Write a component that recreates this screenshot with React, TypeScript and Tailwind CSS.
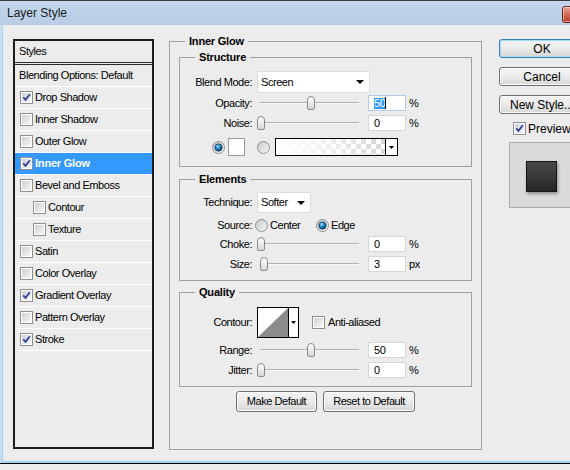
import type { ReactNode } from 'react';

interface StyleItem {
  label: string;
  checked?: boolean;
  active?: boolean;
  indent?: boolean;
}

const STYLE_ITEMS: StyleItem[] = [
  { label: 'Drop Shadow', checked: true },
  { label: 'Inner Shadow' },
  { label: 'Outer Glow' },
  { label: 'Inner Glow', checked: true, active: true },
  { label: 'Bevel and Emboss' },
  { label: 'Contour', indent: true },
  { label: 'Texture', indent: true },
  { label: 'Satin' },
  { label: 'Color Overlay' },
  { label: 'Gradient Overlay', checked: true },
  { label: 'Pattern Overlay' },
  { label: 'Stroke', checked: true },
];

function CheckBox({ checked = false }: { checked?: boolean }) {
  return (
    <span className="flex h-[13px] w-[13px] shrink-0 border border-[#8e8f8f] bg-white p-px">
      <span className="flex h-full w-full items-center justify-center bg-gradient-to-br from-[#cdd0d4] to-[#f7f7f7]">
        {checked && (
          <svg width="9" height="9" viewBox="0 0 9 9">
            <path d="M1.3 4.4 L3.5 6.9 L7.9 1.3" fill="none" stroke="#2b3f94" strokeWidth="1.7" />
          </svg>
        )}
      </span>
    </span>
  );
}

function Radio({ on = false }: { on?: boolean }) {
  return (
    <svg width="13" height="13" viewBox="0 0 13 13" className="shrink-0">
      <defs>
        <linearGradient id="radioFill" x1="0" y1="0" x2="1" y2="1">
          <stop offset="0" stopColor="#c4c6c9" />
          <stop offset="1" stopColor="#f8f8f8" />
        </linearGradient>
        <radialGradient id="radioDot" cx="0.4" cy="0.35" r="0.7">
          <stop offset="0" stopColor="#9adcfc" />
          <stop offset="0.5" stopColor="#1b7fc5" />
          <stop offset="1" stopColor="#0a3a68" />
        </radialGradient>
      </defs>
      <circle cx="6.5" cy="6.5" r="6" fill="url(#radioFill)" stroke="#8e8f8f" />
      {on && <circle cx="6.5" cy="6.5" r="3.7" fill="url(#radioDot)" stroke="#16324d" strokeWidth="0.7" />}
    </svg>
  );
}

function Arrow({ small = false }: { small?: boolean }) {
  return small ? (
    <svg width="5" height="3" viewBox="0 0 5 3">
      <path d="M0 0H5L2.5 3Z" fill="#000" />
    </svg>
  ) : (
    <svg width="8" height="4" viewBox="0 0 8 4">
      <path d="M0 0H8L4 4Z" fill="#000" />
    </svg>
  );
}

function Select({ value, className = '' }: { value: string; className?: string }) {
  return (
    <div className={`flex h-full items-center justify-between border border-[#dcdcdc] bg-white pl-[3px] pr-[5px] ${className}`}>
      <span>{value}</span>
      <Arrow />
    </div>
  );
}

function Slider({ value }: { value: number }) {
  return (
    <div className="relative h-[16px] w-[102px] shrink-0">
      <div className="absolute left-[3px] right-0 top-[7px] h-[2px] border-t border-[#b2b2b2] bg-[#f6f6f6]" />
      <div
        className="absolute top-[1px] h-[14px] w-[8px] rounded-t-[4px] rounded-b-[2px] border border-[#8b8b8b] bg-gradient-to-b from-white to-[#d6d6d6]"
        style={{ left: value }}
      />
    </div>
  );
}

function NumBox({ value, selected = false }: { value: string; selected?: boolean }) {
  return (
    <div
      className={`flex h-[16px] w-[38px] shrink-0 items-center border bg-white pl-[5px] ${
        selected ? 'border-[#b7cbe0]' : 'border-[#d6d6d6]'
      }`}
    >
      {selected ? (
        <>
          <span className="bg-[#3399ff] text-white">{value}</span>
          <span className="h-[12px] w-px bg-black" />
        </>
      ) : (
        value
      )}
    </div>
  );
}

function SliderRow({
  label,
  value,
  text,
  unit = '%',
  selected,
  className = '',
}: {
  label: string;
  value: number;
  text: string;
  unit?: string;
  selected?: boolean;
  className?: string;
}) {
  return (
    <div className={`flex h-[16px] items-center ${className}`}>
      <span className="w-[72px] shrink-0 text-right">{label}</span>
      <div className="ml-[5px]">
        <Slider value={value} />
      </div>
      <div className="ml-[9px]">
        <NumBox value={text} selected={selected} />
      </div>
      <span className="ml-[3px]">{unit}</span>
    </div>
  );
}

function Group({ title, className = '', children }: { title: string; className?: string; children: ReactNode }) {
  return (
    <div className={`border border-[#a0a0a0] ${className}`}>
      <div className="-mt-[8px] ml-[15px] w-fit bg-[#ececec] px-[4px] font-bold leading-[14px] tracking-[-0.2px]">
        {title}
      </div>
      {children}
    </div>
  );
}

function Btn({ children, primary = false, className = '' }: { children: ReactNode; primary?: boolean; className?: string }) {
  return (
    <button
      type="button"
      className={`flex items-center justify-center rounded-[3px] border bg-gradient-to-b from-[#f3f3f3] via-[#ebebeb] to-[#d6d6d6] ${
        primary
          ? 'border-[#3c7fb1] shadow-[inset_0_0_0_1px_#9fdcf8]'
          : 'border-[#707070] shadow-[inset_0_0_0_1px_#fbfbfb]'
      } ${className}`}
    >
      {children}
    </button>
  );
}

export default function App() {
  return (
    <div className="h-[470px] w-[570px] overflow-hidden bg-[#ececec] font-['Liberation_Sans',Arial,sans-serif] text-[11px] leading-none tracking-[-0.45px] text-black">
      <div className="w-[610px] border-b border-black bg-[#cfdeee]">
        {/* Title bar */}
        <div className="flex h-[25px] items-center border-t border-[#3a3a3a] bg-gradient-to-b from-[#c3d6ec] to-[#b8cde5] pl-[7px]">
          <span className="text-[12px] tracking-normal text-[#1a1a1a]">Layer Style</span>
          <div className="mr-[5px] ml-auto mt-[5px] h-[17px] w-[43px] self-start rounded-[3px] border border-[#6e2318] bg-gradient-to-b from-[#e9a896] via-[#d06c57] to-[#b83a22] shadow-[inset_0_0_0_1px_rgba(255,255,255,0.45)]" />
        </div>

        {/* Body */}
        <div className="ml-[2px] flex h-[438px] items-start border-b-2 border-l border-[#9fd3f2] bg-[#ececec] pl-[10px] pt-[14px]">
          {/* Styles list */}
          <div className="h-[410px] w-[141px] shrink-0 border-2 border-[#1c1c1c]">
            <div className="flex h-[24px] items-center border-b-[3px] border-double border-[#2a2a2a] pl-[4px]">Styles</div>
            <div className="flex h-[22px] items-center border-b border-white pl-[4px]">Blending Options: Default</div>
            {STYLE_ITEMS.map((item) => (
              <div
                key={item.label}
                className={`flex h-[22px] items-center gap-[2px] border-b border-white ${item.indent ? 'pl-[18px]' : 'pl-[5px]'} ${
                  item.active ? 'bg-[#3399ff] font-bold tracking-[-0.2px] text-white' : ''
                }`}
              >
                <CheckBox checked={item.checked} />
                <span>{item.label}</span>
              </div>
            ))}
          </div>

          {/* Inner Glow settings */}
          <Group title="Inner Glow" className="ml-[15px] mt-[2px] h-[409px] w-[313px] shrink-0">
            <Group title="Structure" className="mx-[9px] mt-[9px] pb-[10px]">
              <div className="mt-[7px] flex h-[22px] items-center">
                <span className="w-[72px] shrink-0 text-right">Blend Mode:</span>
                <Select value="Screen" className="ml-[5px] w-[113px]" />
              </div>
              <SliderRow label="Opacity:" value={50} text="50" selected className="mt-[2px]" />
              <SliderRow label="Noise:" value={0} text="0" className="mt-[4px]" />
              <div className="mt-[7px] flex h-[18px] items-center pl-[32px]">
                <Radio on />
                <div className="ml-[3px] h-[18px] w-[17px] border border-[#9a9a9a] bg-white" />
                <div className="ml-[12px] flex">
                  <Radio />
                </div>
                <div className="ml-[5px] flex h-[18px] w-[123px] border border-black">
                  <div className="flex-1 bg-[conic-gradient(#d6d6d6_25%,#ffffff_0_50%,#d6d6d6_0_75%,#ffffff_0)] bg-[length:10px_10px]">
                    <div className="h-full w-full bg-gradient-to-r from-white via-white/60 to-white/0" />
                  </div>
                  <div className="flex w-[12px] items-center justify-center border-l border-black bg-white">
                    <Arrow small />
                  </div>
                </div>
              </div>
            </Group>

            <Group title="Elements" className="mx-[9px] mt-[12px] pb-[8px]">
              <div className="mt-[6px] flex h-[21px] items-center">
                <span className="w-[72px] shrink-0 text-right">Technique:</span>
                <Select value="Softer" className="ml-[5px] w-[54px]" />
              </div>
              <div className="mt-[5px] flex h-[14px] items-center">
                <span className="w-[72px] shrink-0 text-right">Source:</span>
                <span className="ml-[3px] flex">
                  <Radio />
                </span>
                <span className="ml-[2px] w-[46px]">Center</span>
                <Radio on />
                <span className="ml-[2px]">Edge</span>
              </div>
              <SliderRow label="Choke:" value={0} text="0" className="mt-[4px]" />
              <SliderRow label="Size:" value={3} text="3" unit="px" className="mt-[4px]" />
            </Group>

            <Group title="Quality" className="mx-[9px] mt-[11px] pb-[8px]">
              <div className="mt-[8px] flex h-[31px] items-center">
                <span className="w-[72px] shrink-0 text-right">Contour:</span>
                <div className="ml-[5px] flex h-[31px] w-[42px] shrink-0 border border-black bg-white">
                  <svg width="30" height="29" viewBox="0 0 30 29" className="shrink-0">
                    <path d="M0 29L30 0V29Z" fill="#8c8c8c" />
                  </svg>
                  <div className="flex flex-1 items-center justify-center border-l border-black">
                    <Arrow small />
                  </div>
                </div>
                <span className="ml-[13px] flex">
                  <CheckBox />
                </span>
                <span className="ml-[3px]">Anti-aliased</span>
              </div>
              <SliderRow label="Range:" value={50} text="50" className="mt-[4px]" />
              <SliderRow label="Jitter:" value={0} text="0" className="mt-[4px]" />
            </Group>

            <div className="mt-[4px] flex justify-center gap-[6px]">
              <Btn className="h-[21px] w-[81px]">Make Default</Btn>
              <Btn className="h-[21px] w-[92px]">Reset to Default</Btn>
            </div>
          </Group>

          {/* Right column */}
          <div className="ml-[17px] w-[86px] shrink-0 text-[12px] tracking-normal">
            <Btn primary className="h-[19px] w-[86px]">OK</Btn>
            <Btn className="mt-[9px] h-[19px] w-[86px]">Cancel</Btn>
            <Btn className="mt-[9px] h-[19px] w-[86px]">New Style...</Btn>
            <div className="mt-[8px] flex h-[13px] items-center pl-[14px]">
              <CheckBox checked />
              <span className="ml-[2px]">Preview</span>
            </div>
            <div className="ml-[10px] mt-[7px] flex h-[66px] w-[66px] items-center border border-[#ababab] bg-[#dadada] pl-[16px] pt-[2px]">
              <div className="h-[31px] w-[31px] border border-[#151515] bg-gradient-to-b from-[#4a4a4a] to-[#262626] shadow-[1px_2px_3px_rgba(0,0,0,0.35)]" />
            </div>
          </div>
        </div>
      </div>
    </div>
  );
}
